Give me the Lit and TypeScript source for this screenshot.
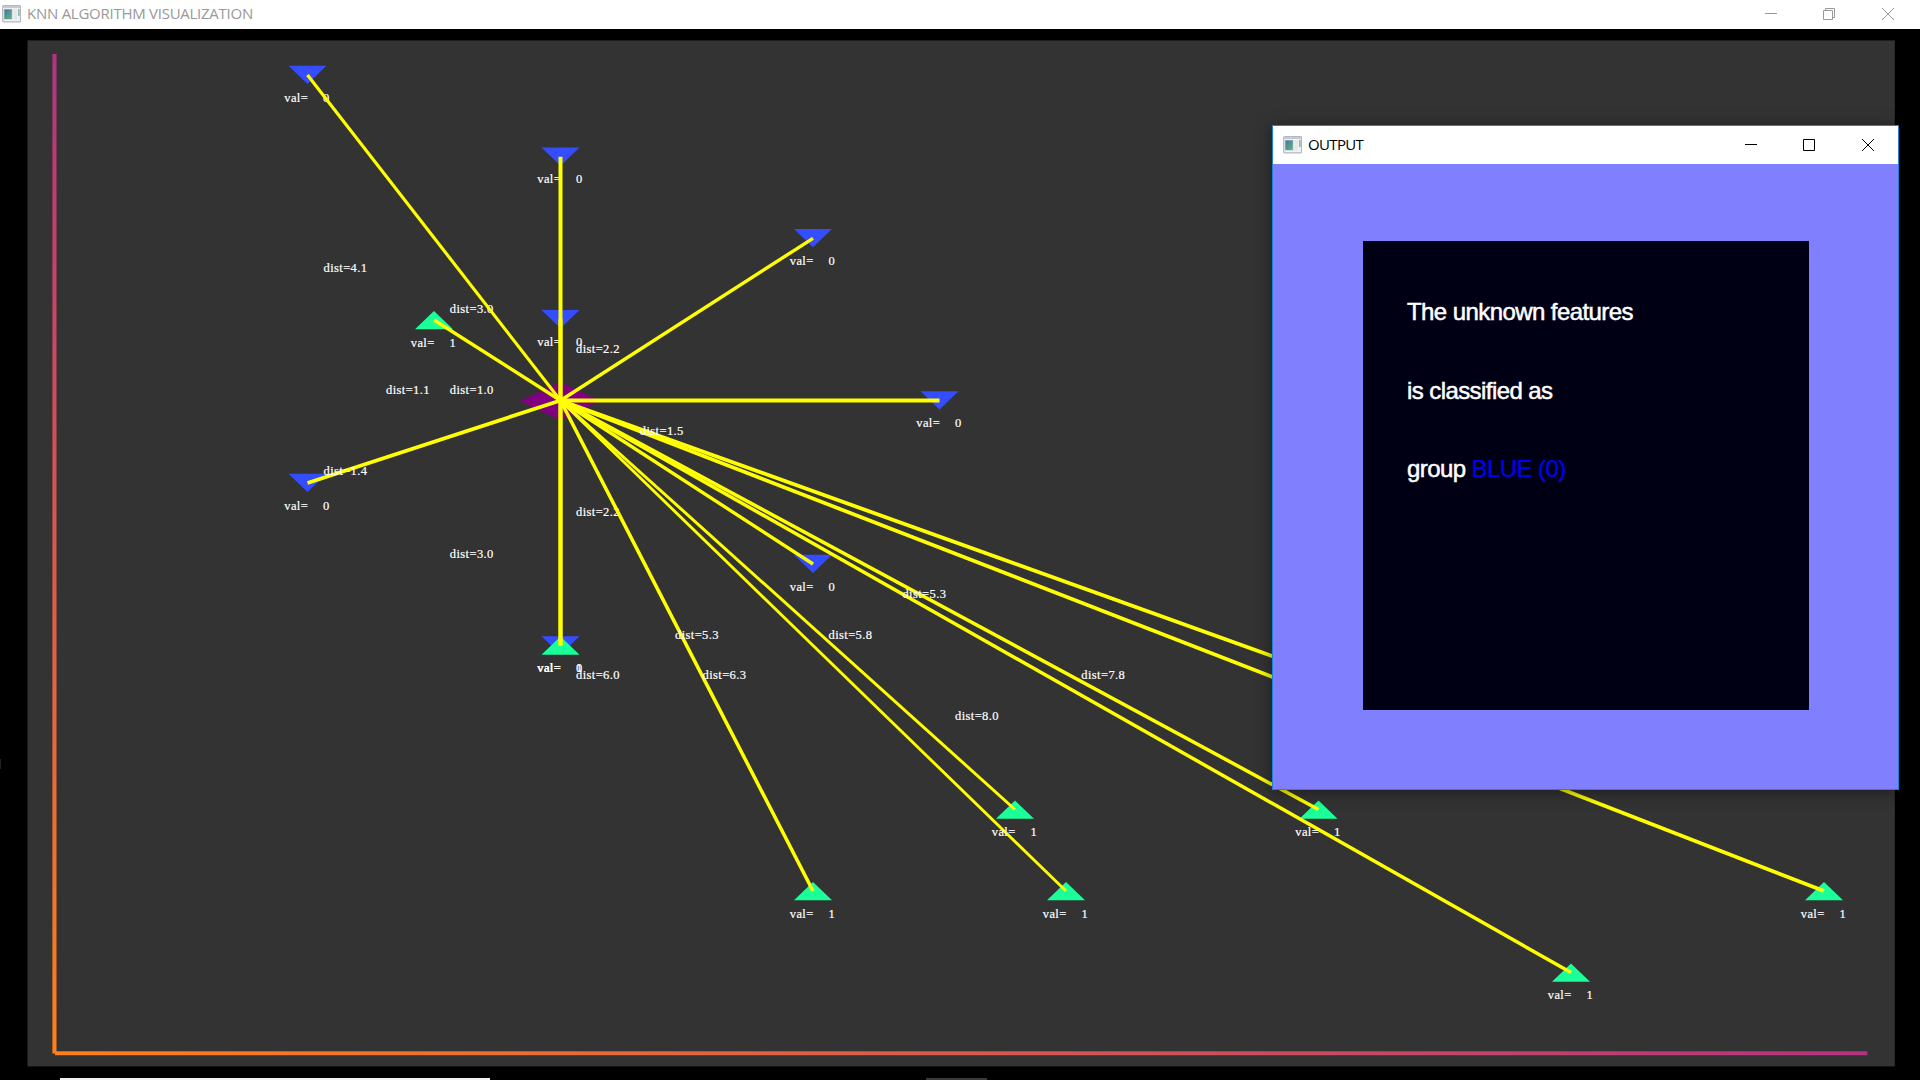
import { LitElement, html, svg, css } from "lit";
import { customElement, property } from "lit/decorators.js";

type Sample = { x: number; y: number; val: 0 | 1 };
type Distance = { x: number; y: number; text: string; under?: boolean };

const UNKNOWN = { x: 560.5, y: 400.5 };

const SAMPLES: Sample[] = [
  { x: 307.5, y: 75, val: 0 },
  { x: 560.5, y: 156.7, val: 0 },
  { x: 560.5, y: 319.2, val: 0 },
  { x: 813, y: 238.3, val: 0 },
  { x: 939.5, y: 400.5, val: 0 },
  { x: 307.5, y: 483, val: 0 },
  { x: 813, y: 564, val: 0 },
  { x: 560.5, y: 645.5, val: 0 },
  { x: 434, y: 320, val: 1 },
  { x: 560.5, y: 645.5, val: 1 },
  { x: 813, y: 891, val: 1 },
  { x: 1015, y: 809.5, val: 1 },
  { x: 1066, y: 891, val: 1 },
  { x: 1318.5, y: 809.5, val: 1 },
  { x: 1571, y: 972.5, val: 1 },
  { x: 1824, y: 891, val: 1 },
];

/* Sample that sits behind the output window; only its link is visible. */
const COVERED = { x: 1470, y: 727 };

const DISTANCES: Distance[] = [
  { x: 323.5, y: 271.5, text: "4.1" },
  { x: 449.8, y: 312.7, text: "3.0", under: true },
  { x: 576, y: 353, text: "2.2" },
  { x: 386, y: 393.7, text: "1.1" },
  { x: 449.8, y: 393.7, text: "1.0" },
  { x: 323.5, y: 475.3, text: "1.4" },
  { x: 639.8, y: 434.9, text: "1.5" },
  { x: 576, y: 516.2, text: "2.2", under: true },
  { x: 449.8, y: 557.6, text: "3.0" },
  { x: 576, y: 678.7, text: "6.0" },
  { x: 675, y: 638.7, text: "5.3" },
  { x: 702.5, y: 678.7, text: "6.3" },
  { x: 828.5, y: 638.7, text: "5.8" },
  { x: 902.4, y: 597.8, text: "5.3" },
  { x: 955, y: 720, text: "8.0" },
  { x: 1081.3, y: 678.7, text: "7.8" },
];

@customElement("app-icon")
class AppIcon extends LitElement {
  static styles = css`
    :host { display: block; width: 19px; height: 18px; }
    svg { display: block; }
  `;
  render() {
    return html`<svg width="19" height="18" viewBox="0 0 19 18">
      <defs>
        <linearGradient id="g" x1="0" y1="0" x2="1" y2="1">
          <stop offset="0" stop-color="#4a72a4" />
          <stop offset="1" stop-color="#5cb883" />
        </linearGradient>
      </defs>
      <rect x=".7" y=".7" width="17.8" height="16.2" rx="1" fill="#f1f1f2" stroke="#b4b7bb" stroke-width="1.2" />
      <rect x="1" y="1" width="17" height="2" fill="#c6c9ce" />
      <rect x="1.8" y="4" width="8.6" height="10.6" fill="#c4d0da" />
      <rect x="2.4" y="4.4" width="7.4" height="9.6" fill="url(#g)" />
      <rect x="11.6" y="4" width="3.4" height="10.6" fill="#e7e7e9" />
      <rect x="16" y="4" width="1.7" height="7" fill="#8cbcb0" />
    </svg>`;
  }
}

@customElement("window-buttons")
class WindowButtons extends LitElement {
  @property({ type: Boolean }) maximized = false;
  static styles = css`
    :host { display: flex; gap: 46px; align-items: center; }
    svg { display: block; fill: none; stroke: currentColor; stroke-width: 1; overflow: visible; }
    .close { margin-left: 1px; }
  `;
  render() {
    return html`
      <svg width="12" height="12"><path d="M0 5.5H12" /></svg>
      ${this.maximized
        ? html`<svg width="12" height="12"><path d="M.5 2.5h9v9h-9zM2.5 2.5v-2h9v9h-2" /></svg>`
        : html`<svg width="12" height="12"><path d="M.5 .5h11v11h-11z" /></svg>`}
      <svg class="close" width="12" height="12"><path d="M0 0L12 12M12 0L0 12" /></svg>
    `;
  }
}

@customElement("knn-plot")
class KnnPlot extends LitElement {
  static styles = css`
    :host { display: block; }
    svg { display: block; }
    .label { font: 12.5px "Liberation Serif", serif; fill: #fff; stroke: #fff; stroke-width: 0.2px; }
    .blue { fill: #334dff; }
    .green { fill: #1aff99; }
    .link { stroke: #ffff00; }
    .unknown { fill: #800080; }
  `;

  private marker(s: Sample) {
    const d = s.val ? -1 : 1;
    return svg`<polygon class=${s.val ? "green" : "blue"}
      points="${s.x - 19},${s.y - 9.3 * d} ${s.x + 19},${s.y - 9.3 * d} ${s.x},${s.y + 9 * d}" />`;
  }

  private value(s: Sample) {
    return svg`<text class="label" x=${s.x - 23.2} y=${s.y + 26.5} textLength="23.5">val=</text>
      <text class="label" x=${s.x + 15.5} y=${s.y + 26.5}>${s.val}</text>`;
  }

  private link(s: { x: number; y: number }) {
    const dx = Math.abs(s.x - UNKNOWN.x);
    const dy = Math.abs(s.y - UNKNOWN.y);
    const width = (4 * Math.max(dx, dy)) / Math.hypot(dx, dy);
    return svg`<line class="link" x1=${UNKNOWN.x} y1=${UNKNOWN.y} x2=${s.x} y2=${s.y} stroke-width=${width} />`;
  }

  private distance(d: Distance) {
    return svg`<text class="label" x=${d.x} y=${d.y} textLength="43.5">dist=${d.text}</text>`;
  }

  render() {
    return html`<svg width="1920" height="1051" viewBox="0 29 1920 1051">
      <defs>
        <linearGradient id="v" gradientUnits="userSpaceOnUse" x1="0" y1="1053" x2="0" y2="54">
          <stop offset="0" stop-color="#ff801a" /><stop offset="1" stop-color="#b33380" />
        </linearGradient>
        <linearGradient id="h" gradientUnits="userSpaceOnUse" x1="55" y1="0" x2="1867" y2="0">
          <stop offset="0" stop-color="#ff801a" /><stop offset="1" stop-color="#b33380" />
        </linearGradient>
      </defs>
      <rect x="27.5" y="40.4" width="1867.3" height="1026" fill="#333" />
      <rect x="52.4" y="54" width="4.1" height="999.5" fill="url(#v)" />
      <rect x="55" y="1051.3" width="1812.3" height="3.9" fill="url(#h)" />
      <polygon class="unknown" points="520,401 560.5,382 600,401 560.5,420.5" />
      ${SAMPLES.map((s) => this.marker(s))}
      ${SAMPLES.filter((s) => !s.val).map((s) => this.value(s))}
      ${DISTANCES.filter((d) => d.under).map((d) => this.distance(d))}
      ${[...SAMPLES, COVERED].map((s) => this.link(s))}
      ${SAMPLES.filter((s) => s.val).map((s) => this.value(s))}
      ${DISTANCES.filter((d) => !d.under).map((d) => this.distance(d))}
      <rect x="60" y="1078" width="430" height="2" fill="#f2f2f2" />
      <rect x="926" y="1078" width="61" height="2" fill="#3a3a3a" />
      <rect x="0" y="759" width="1" height="10" fill="#222" />
    </svg>`;
  }
}

@customElement("output-window")
class OutputWindow extends LitElement {
  static styles = css`
    :host {
      display: flex; flex-direction: column; box-sizing: border-box;
      border: 1px solid #1883d7; background: #8080ff;
      box-shadow: 0 2px 16px rgba(0, 0, 0, 0.45);
    }
    .bar {
      display: flex; align-items: center; height: 38px; box-sizing: border-box;
      padding: 0 24px 0 10px; background: #fff; color: #000;
    }
    .title { flex: 1; padding-left: 6px; font: 15px/36px "Open Sans", sans-serif; letter-spacing: -0.65px; height: 38px; }
    .body { flex: 1; padding: 77px 89px 79px 90px; display: flex; }
    .canvas {
      flex: 1; background: #000014; color: #fff; padding: 32px 0 0 44px;
      font: 24px/78.5px "Liberation Sans", sans-serif; letter-spacing: -0.58px;
      -webkit-text-stroke: 0.5px #fff;
    }
    .line { height: 78.5px; white-space: nowrap; }
    .group { color: #0000f5; -webkit-text-stroke: 0.2px #0000f5; }
  `;
  render() {
    return html`
      <div class="bar">
        <app-icon></app-icon><div class="title">OUTPUT</div><window-buttons></window-buttons>
      </div>
      <div class="body">
        <div class="canvas">
          <div class="line">The unknown features</div>
          <div class="line">is classified as</div>
          <div class="line">group <span class="group">BLUE (0)</span></div>
        </div>
      </div>
    `;
  }
}

@customElement("app-root")
class AppRoot extends LitElement {
  static styles = css`
    :host {
      display: flex; flex-direction: column; position: relative; width: 1920px; height: 1080px;
      overflow: hidden; background: #000;
    }
    .bar {
      display: flex; align-items: center; height: 29px; box-sizing: border-box;
      padding: 0 26px 1px 2px; background: #fff; color: #999;
    }
    .title { flex: 1; padding-left: 6px; font: 15px/27px "Open Sans", sans-serif; letter-spacing: -0.26px; height: 28px; }
    .output { position: absolute; left: 1272px; top: 125px; width: 627px; height: 665px; }
  `;
  render() {
    return html`
      <div class="bar">
        <app-icon></app-icon><div class="title">KNN ALGORITHM VISUALIZATION</div>
        <window-buttons maximized></window-buttons>
      </div>
      <knn-plot></knn-plot>
      <output-window class="output"></output-window>
    `;
  }
}
